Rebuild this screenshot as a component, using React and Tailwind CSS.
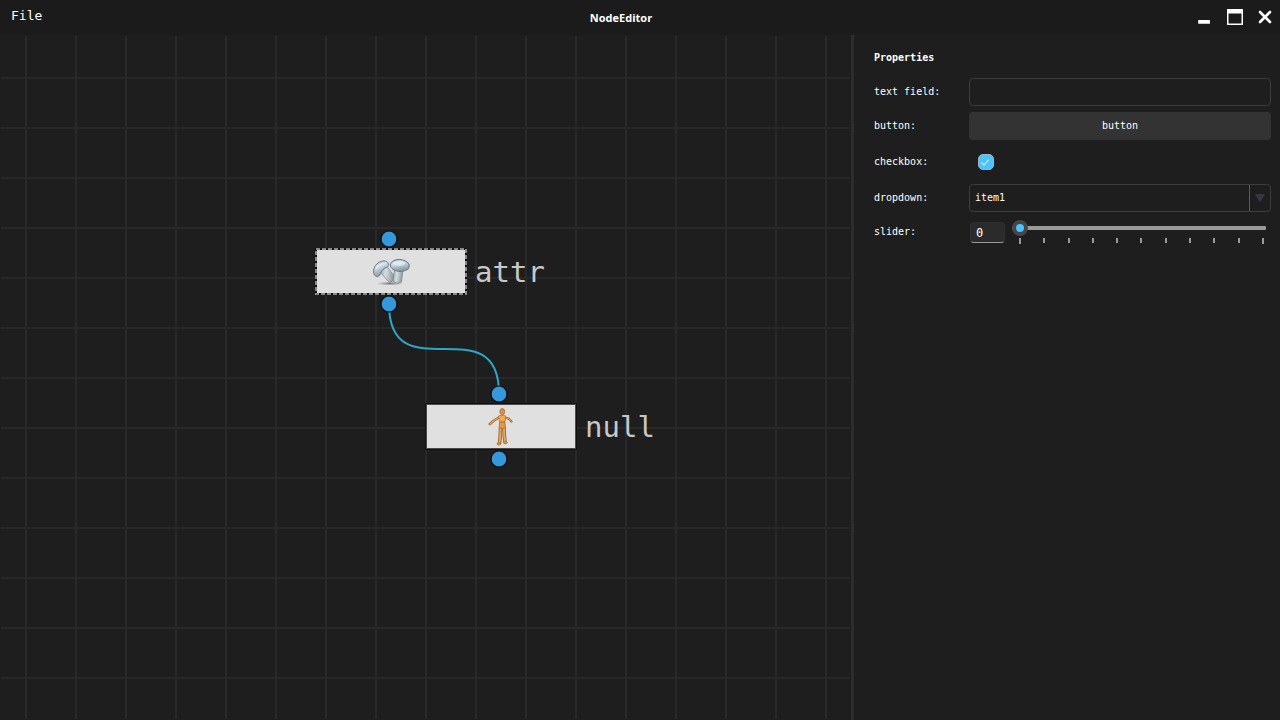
import { useState } from "react";

const SCREWS = (
  <svg viewBox="0 0 38 28" className="h-7 w-[38px]" aria-hidden="true">
    <defs>
      <linearGradient id="metal" x1="0" y1="0" x2="0.4" y2="1">
        <stop offset="0" stopColor="#b4c4cf" />
        <stop offset="0.4" stopColor="#d3e0e7" />
        <stop offset="1" stopColor="#8796a3" />
      </linearGradient>
      <linearGradient id="shank" x1="0" y1="0" x2="1" y2="0.2">
        <stop offset="0" stopColor="#929fa7" />
        <stop offset="0.45" stopColor="#d5dddf" />
        <stop offset="1" stopColor="#8c989f" />
      </linearGradient>
      <radialGradient id="shade">
        <stop offset="0" stopColor="#555" stopOpacity="0.8" />
        <stop offset="1" stopColor="#777" stopOpacity="0" />
      </radialGradient>
    </defs>
    <ellipse cx="18" cy="25.500" rx="14" ry="2" fill="url(#shade)" />
    <path d="M8 14 L14.500 8 L23 19 Q21.500 23.500 17.500 24.500 Z" fill="url(#shank)" stroke="#7d8990" strokeWidth="0.800" />
    <path d="M4.500 18.500 C1 17.500 0.500 11.500 3.500 7.500 C6.500 3.500 11.500 2 14.500 3.500 C17.500 5.500 17 8.500 14 9.500 C11 10.500 9.500 12.500 8.500 15.500 C7.500 18 6 19 4.500 18.500 Z" fill="url(#metal)" stroke="#66788a" strokeWidth="1" />
    <path d="M4 11 C6 7.500 8.500 6 12 5.500" fill="none" stroke="#e6eff3" strokeWidth="1.200" />
    <path d="M22.500 11 L31 11 L29.500 24 Q25 26.500 21 23.500 Z" fill="url(#shank)" stroke="#7d8990" strokeWidth="0.800" />
    <ellipse cx="27.800" cy="7.500" rx="9.500" ry="5.900" transform="rotate(4 27.800 7.500)" fill="url(#metal)" stroke="#66788a" strokeWidth="1" />
    <ellipse cx="27" cy="5.500" rx="6" ry="2.600" fill="#eaf3f7" opacity="0.600" />
  </svg>
);

const MANNEQUIN = (
  <svg viewBox="0 0 26 38" className="h-[38px] w-[26px]" aria-hidden="true">
    <g fill="none" strokeLinecap="round" strokeLinejoin="round">
      <g stroke="#9c6327">
        <path d="M11 9.500 L6 12.500 L1.800 16" strokeWidth="2.600" />
        <path d="M17 9.500 L20.500 10.500 L23.500 13.500" strokeWidth="2.200" />
        <path d="M12.500 20 L12.300 27 L11.500 35" strokeWidth="3.600" />
        <path d="M16 20 L16.300 27 L17 34" strokeWidth="3.600" />
      </g>
      <g stroke="#e2a664">
        <path d="M11 9.500 L6 12.500 L1.800 16" strokeWidth="1.300" />
        <path d="M17 9.500 L20.500 10.500 L23.500 13.500" strokeWidth="1" />
        <path d="M12.500 20 L12.300 27 L11.500 34" strokeWidth="2" />
        <path d="M16 20 L16.300 27 L17 33" strokeWidth="2" />
      </g>
    </g>
    <path d="M10.500 8 Q14 6 17.800 8 L17 13.500 Q14 15.500 11.500 13.500 Z" fill="#f0ab58" stroke="#b3712c" strokeWidth="0.800" />
    <path d="M11.800 14 H16.800 L17.500 19.500 Q14 22 11 19.500 Z" fill="#e39a48" stroke="#a96a29" strokeWidth="0.800" />
    <ellipse cx="14.300" cy="3.600" rx="2.400" ry="3" fill="#dc9145" stroke="#a96a29" strokeWidth="0.800" />
    <ellipse cx="11" cy="35.800" rx="2" ry="1.200" fill="#dba063" stroke="#9c6327" strokeWidth="0.700" />
    <ellipse cx="17.500" cy="34.500" rx="1.800" ry="1.200" fill="#dba063" stroke="#9c6327" strokeWidth="0.700" />
  </svg>
);

const NODES = [
  { name: "attr", x: 314, y: 212, icon: SCREWS, selected: true },
  { name: "null", x: 424, y: 367, icon: MANNEQUIN, selected: false },
];

function Port({ x, y }) {
  return <circle cx={x} cy={y} r="8" fill="#3498db" stroke="#0b0b0b" strokeWidth="1.200" />;
}

function Node({ name, x, y, icon, selected }) {
  return (
    <div className="absolute flex items-center gap-2" style={{ left: x, top: y }}>
      <div className="relative flex h-[47px] w-[152px] items-center justify-center">
        <svg className="absolute inset-0 h-full w-full" viewBox="0 0 152 47" aria-hidden="true">
          <rect x="1" y="1" width="150" height="45" fill="#e0e0e0" stroke="#111" strokeWidth="2" />
          {selected ? (
            <rect x="1" y="1" width="150" height="45" fill="none" stroke="#8a8a8a" strokeWidth="2" strokeDasharray="4 2" />
          ) : (
            <rect x="1.500" y="1.500" width="149" height="44" fill="none" stroke="#4a4a4a" strokeWidth="1" />
          )}
        </svg>
        <div className="relative">{icon}</div>
      </div>
      <span className="font-['DejaVu_Sans_Mono',monospace] text-[29px] leading-9 text-[#c8c8c8]">{name}</span>
    </div>
  );
}

function Canvas() {
  return (
    <main className="flex min-w-0 flex-1 flex-col p-px">
      <div className="relative flex-1 overflow-hidden bg-[linear-gradient(to_right,#282828_2px,transparent_2px),linear-gradient(to_bottom,#282828_2px,transparent_2px)] bg-[length:50px_50px] bg-[position:24px_0px,0px_41px]">
        <svg className="absolute top-0 left-0 h-full w-full" aria-hidden="true">
          <path d="M388 268 C388 358 498 268 498 358" fill="none" stroke="#2da7c7" strokeWidth="2" />
        </svg>
        {NODES.map((node) => (
          <Node key={node.name} {...node} />
        ))}
        <svg className="pointer-events-none absolute top-0 left-0 h-full w-full" aria-hidden="true">
          <Port x={388} y={203} />
          <Port x={388} y={268} />
          <Port x={498} y={358} />
          <Port x={498} y={423} />
        </svg>
      </div>
    </main>
  );
}

function Row({ id, label, children }) {
  return (
    <div className="flex min-h-7 items-center">
      <label htmlFor={id} className="w-[95px] shrink-0">
        {label}
      </label>
      {children}
    </div>
  );
}

function Properties() {
  const [text, setText] = useState("");
  const [checked, setChecked] = useState(true);
  const [value, setValue] = useState(0);

  return (
    <aside className="w-[429px] shrink-0 border-l-3 border-[#2d2d2d] pt-[15px] pr-[9px] pl-5 font-['DejaVu_Sans_Mono',monospace] text-[10px] leading-4 text-white">
      <h2 className="mb-3 font-bold">Properties</h2>
      <div className="flex flex-col gap-1.5">
        <Row id="text-field" label="text field:">
          <input
            id="text-field"
            type="text"
            value={text}
            onChange={(e) => setText(e.target.value)}
            className="h-7 min-w-0 flex-1 rounded-[4px] border border-[#3d3d3d] bg-transparent px-1.5 outline-none"
          />
        </Row>
        <Row id="action" label="button:">
          <button id="action" type="button" className="h-7 flex-1 rounded-[4px] bg-[#333333]">
            button
          </button>
        </Row>
        <Row id="check" label="checkbox:">
          <div className="ml-[9px] grid h-8 items-center">
            <input
              id="check"
              type="checkbox"
              checked={checked}
              onChange={(e) => setChecked(e.target.checked)}
              className="col-start-1 row-start-1 size-4 appearance-none rounded-[5px] border border-[#9bb5c4] checked:bg-[#4cc2ff]"
            />
            {checked && (
              <svg viewBox="0 0 16 16" className="pointer-events-none col-start-1 row-start-1 size-4" aria-hidden="true">
                <path d="M3.500 8.500 L6 11 L11 5.500" fill="none" stroke="#d4f0ff" strokeWidth="1.100" />
              </svg>
            )}
          </div>
        </Row>
        <Row id="dropdown" label="dropdown:">
          <div className="grid h-7 min-w-0 flex-1 grid-cols-[1fr_20px] rounded-[4px] border border-[#3d3d3d]">
            <select
              id="dropdown"
              className="col-span-2 col-start-1 row-start-1 appearance-none bg-transparent pr-6 pl-[5px] outline-none"
            >
              <option>item1</option>
              <option>item2</option>
            </select>
            <span className="pointer-events-none col-start-2 row-start-1 -ml-px flex items-center justify-center border-l border-[#5c5c5c]">
              <svg viewBox="0 0 10 8" className="h-2 w-2.5" aria-hidden="true">
                <path d="M0 0 H10 L6 7 Q5 8.500 4 7 Z" fill="#343842" />
              </svg>
            </span>
          </div>
        </Row>
        <Row id="slider" label="slider:">
          <input
            type="text"
            aria-label="slider value"
            value={value}
            onChange={(e) => setValue(Number(e.target.value) || 0)}
            className="ml-px h-[21px] w-[35px] rounded-[4px] border border-[#303030] border-b-[#9a9a9a] bg-[#2b2b2b] px-[5px] pt-0.5 font-['DejaVu_Sans_Mono',monospace] text-xs outline-none"
          />
          <div className="ml-[7px] flex min-w-0 flex-1 flex-col pr-[5px]">
            <input
              id="slider"
              type="range"
              min="0"
              max="10"
              value={value}
              onChange={(e) => setValue(Number(e.target.value))}
              className="h-4 w-full appearance-none bg-transparent [&::-webkit-slider-runnable-track]:h-1 [&::-webkit-slider-runnable-track]:rounded-[1px] [&::-webkit-slider-runnable-track]:bg-[#9a9a9a] [&::-webkit-slider-thumb]:-mt-1.5 [&::-webkit-slider-thumb]:size-4 [&::-webkit-slider-thumb]:appearance-none [&::-webkit-slider-thumb]:rounded-full [&::-webkit-slider-thumb]:border-4 [&::-webkit-slider-thumb]:border-[#454545] [&::-webkit-slider-thumb]:bg-[#4cc2ff]"
            />
            <div className="flex items-start justify-between pt-0.5 pr-0.5 pl-[7px]">
              {Array.from({ length: 11 }, (_, i) => (
                <span key={i} className="h-[5px] w-0.5 bg-[#9a9a9a] first:h-1.5 last:h-1.5" />
              ))}
            </div>
          </div>
        </Row>
      </div>
    </aside>
  );
}

export default function App() {
  return (
    <div className="flex min-h-screen flex-col bg-[#1e1e1e]">
      <header className="flex h-[35px] items-center bg-[#1b1b1b] text-white">
        <nav className="w-[60px] pb-1 pl-[11px]">
          <button type="button" className="block font-['DejaVu_Sans_Mono',monospace] text-[13px] leading-4">
            File
          </button>
        </nav>
        <h1 className="flex-1 text-center font-['Open_Sans',sans-serif] text-[11px] leading-4 font-bold">NodeEditor</h1>
        <div className="flex w-[98px] items-center justify-end gap-3.5 pr-[7px] pb-px">
          <button type="button" aria-label="Minimize">
            <svg viewBox="0 0 16 16" className="size-4">
              <rect x="1.200" y="11" width="11.800" height="3.800" rx="0.500" fill="#fff" />
            </svg>
          </button>
          <button type="button" aria-label="Maximize">
            <svg viewBox="0 0 16 16" className="size-4">
              <path d="M0 0 H16 V16 H0 Z M1.500 4.500 V14.500 H14.500 V4.500 Z" fill="#fff" fillRule="evenodd" />
            </svg>
          </button>
          <button type="button" aria-label="Close">
            <svg viewBox="0 0 16 16" className="size-4">
              <path d="M3 3 L13 13 M13 3 L3 13" stroke="#fff" strokeWidth="2.600" strokeLinecap="round" />
            </svg>
          </button>
        </div>
      </header>
      <div className="flex flex-1">
        <Canvas />
        <Properties />
      </div>
    </div>
  );
}
